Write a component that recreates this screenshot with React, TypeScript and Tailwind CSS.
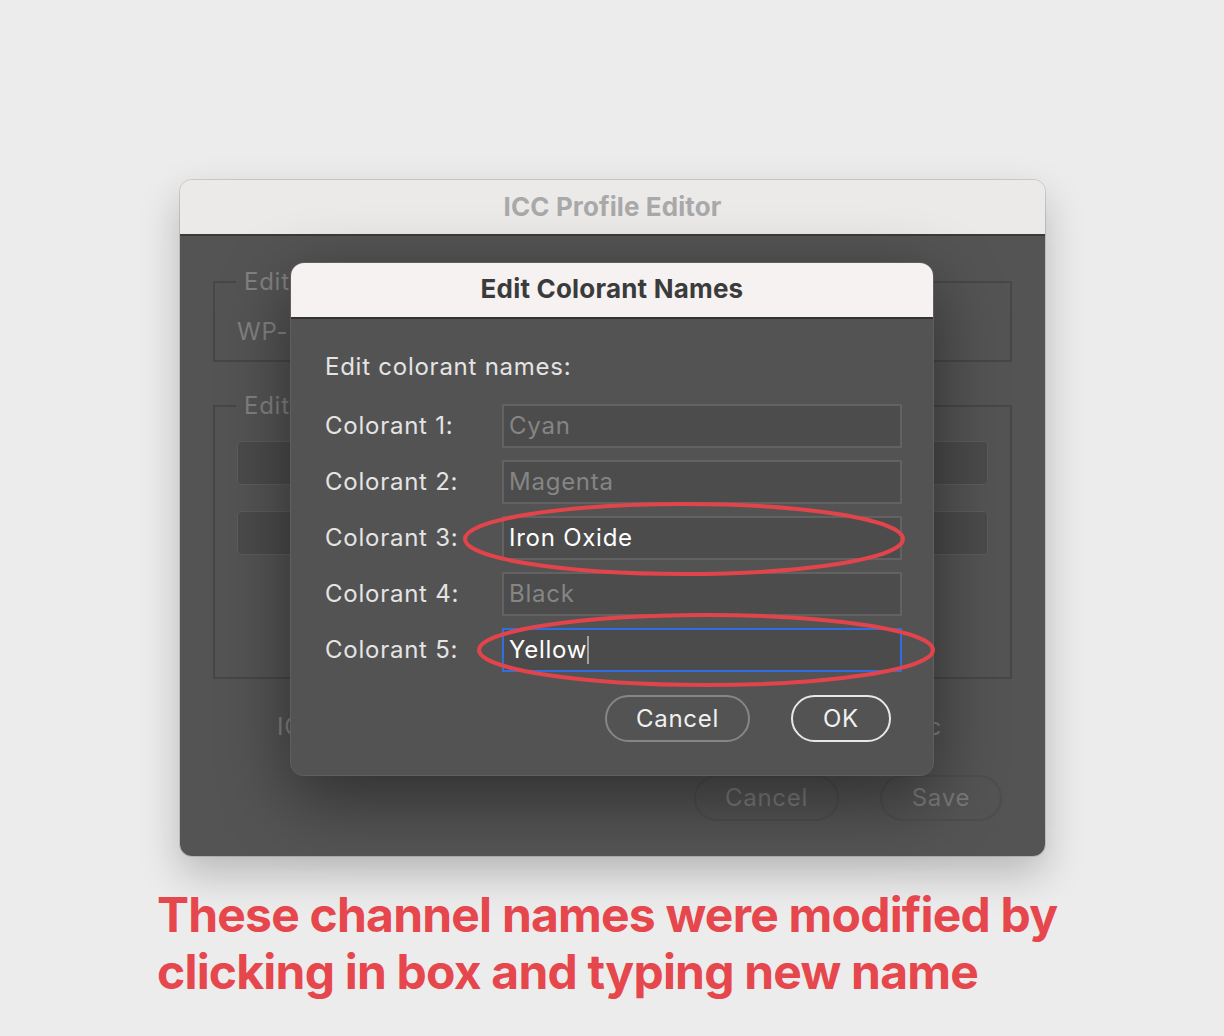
import React from 'react';

const colorants = [
  { label: 'Colorant 1:', value: 'Cyan', edited: false },
  { label: 'Colorant 2:', value: 'Magenta', edited: false },
  { label: 'Colorant 3:', value: 'Iron Oxide', edited: true },
  { label: 'Colorant 4:', value: 'Black', edited: false },
  { label: 'Colorant 5:', value: 'Yellow', edited: true, focused: true },
];

function BackgroundWindow() {
  return (
    <div className="w-[865px] h-[676px] rounded-[12px] overflow-hidden shadow-[0_0_0_1px_rgba(0,0,0,0.12),0_18px_40px_rgba(0,0,0,0.22)] flex flex-col">
      <div className="h-[56px] shrink-0 bg-[#ebeae9] border-b-2 border-[#3a3a3a] flex items-center justify-center pb-[2px]">
        <span className="text-[26px] font-bold text-[#a9a9a9] tracking-[0.1px]">ICC Profile Editor</span>
      </div>
      <div className="flex-1 bg-[#545454] px-[33px] pt-[32px] flex flex-col tracking-[0.75px]">
        <fieldset className="border-2 border-[#474747] h-[94px] px-[22px] m-0">
          <legend className="-ml-[1px] px-[8px] text-[24px] text-[#828282] leading-[28px]">Edit</legend>
          <div className="text-[24px] text-[#828282] leading-[28px] mt-[22px]">WP-5C</div>
        </fieldset>
        <fieldset className="border-2 border-[#474747] h-[287px] px-[22px] m-0 mt-[30px]">
          <legend className="-ml-[1px] px-[8px] text-[24px] text-[#828282] leading-[28px]">Edit</legend>
          <div className="flex flex-col gap-[26px] mt-[21px]">
            <div className="h-[44px] rounded-[4px] bg-[#4b4b4b] border border-[#5c5c5c]" />
            <div className="h-[44px] rounded-[4px] bg-[#4b4b4b] border border-[#5c5c5c]" />
          </div>
        </fieldset>
        <div className="flex justify-between pl-[64px] pr-[70px] mt-[33px] text-[24px] text-[#828282] leading-[30px]">
          <span>ICC v4</span>
          <span>Basic</span>
        </div>
        <div className="flex justify-end gap-[41px] pr-[10px] mt-[33px]">
          <div className="w-[145px] h-[46px] rounded-full border-2 border-[#4e4e4e] flex items-center justify-center text-[24px] text-[#7a7a7a]">Cancel</div>
          <div className="w-[122px] h-[46px] rounded-full border-2 border-[#4e4e4e] flex items-center justify-center text-[24px] text-[#7a7a7a]">Save</div>
        </div>
      </div>
    </div>
  );
}

function ColorantDialog() {
  return (
    <div className="w-[644px] h-[514px] rounded-[14px] overflow-hidden border border-[#5f5f5f] shadow-[0_22px_70px_rgba(0,0,0,0.45)] flex flex-col">
      <div className="h-[56px] shrink-0 bg-[#f5f2f1] border-b-2 border-[#333333] flex items-center justify-center pb-[3px]">
        <span className="text-[26px] font-bold text-[#3b3b3b] tracking-[0.2px]">Edit Colorant Names</span>
      </div>
      <div className="flex-1 bg-[#535353] pl-[34px] pr-[31px] pt-[33px] tracking-[0.75px]">
        <div className="text-[24px] leading-[30px] text-[#e4e4e4]">Edit colorant names:</div>
        <div className="flex flex-col gap-[12px] mt-[22px]">
          {colorants.map((c) => (
            <div key={c.label} className="flex items-center">
              <span className="w-[177px] shrink-0 text-[24px] leading-[30px] text-[#e4e4e4]">{c.label}</span>
              <div
                className={
                  c.focused
                    ? 'w-[400px] h-[44px] border-2 border-[#2f6de0] bg-[#4b4b4b] flex items-center pl-[5px]'
                    : 'w-[400px] h-[44px] border-2 border-[#626262] bg-[#4c4c4c] flex items-center pl-[5px]'
                }
              >
                <span className={c.edited ? 'text-[24px] text-white' : 'text-[24px] text-[#858585]'}>{c.value}</span>
                {c.focused && <span className="w-[2px] h-[28px] bg-[#a0a0a0]" />}
              </div>
            </div>
          ))}
        </div>
        <div className="flex justify-end gap-[41px] pr-[11px] mt-[23px]">
          <div className="w-[145px] h-[47px] rounded-full border-2 border-[#868686] flex items-center justify-center text-[24px] text-[#f0f0f0]">Cancel</div>
          <div className="w-[100px] h-[47px] rounded-full border-2 border-[#e8e8e8] flex items-center justify-center text-[24px] text-[#f0f0f0]">OK</div>
        </div>
      </div>
    </div>
  );
}

export default function App() {
  return (
    <div className="relative w-[1224px] h-[1036px] bg-[#ececec] font-['Inter','Noto_Sans',sans-serif] overflow-hidden">
      <div className="pt-[180px] pl-[180px]">
        <BackgroundWindow />
      </div>
      <div className="pl-[157px] mt-[30px] text-[48px] font-bold leading-[57px] text-[#e6474d] tracking-[-0.8px]">
        <div>These channel names were modified by</div>
        <div>clicking in box and typing new name</div>
      </div>
      <div className="absolute left-[290px] top-[262px]">
        <ColorantDialog />
      </div>
      <svg className="absolute left-0 top-0 pointer-events-none" width="1224" height="1036" viewBox="0 0 1224 1036">
        <ellipse cx="684" cy="539" rx="219" ry="35" fill="none" stroke="#e2444b" strokeWidth="4" />
        <ellipse cx="706" cy="650" rx="227" ry="35" fill="none" stroke="#e2444b" strokeWidth="4" />
      </svg>
    </div>
  );
}
